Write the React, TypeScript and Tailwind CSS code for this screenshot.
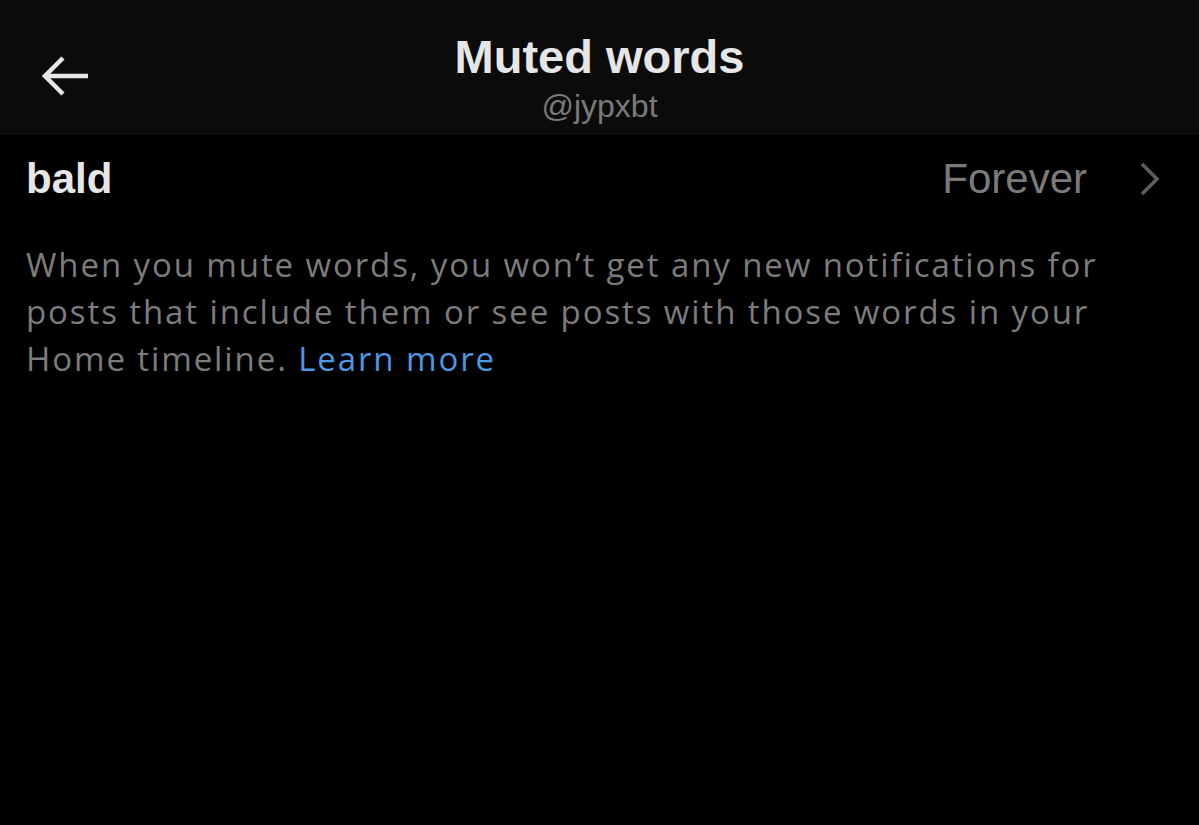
import React from 'react';

const BackArrow = () => (
  <svg width="50" height="42" viewBox="0 0 50 42" fill="none" stroke="#e6e6e6" strokeWidth="4.5" strokeLinecap="butt">
    <path d="M47 21H4" />
    <path d="M22 3L4 21l18 18" />
  </svg>
);

const Chevron = () => (
  <svg width="22" height="36" viewBox="0 0 22 36" fill="none" stroke="#5e5e5e" strokeWidth="3.5">
    <path d="M3 3l15 15L3 33" />
  </svg>
);

const App: React.FC = () => {
  return (
    <div className="min-h-[825px] w-full bg-black text-[#e6e6e6] font-['Liberation_Sans',Arial,sans-serif]">
      <header className="relative h-[135px] bg-[#0b0b0b] flex flex-col items-center pt-[29px]">
        <button className="absolute left-[41px] top-[55px]">
          <BackArrow />
        </button>
        <h1 className="text-[47px] leading-[56px] font-bold text-[#e6e6e6]">Muted words</h1>
        <span className="text-[32px] leading-[36px] text-[#7a7a7a] mt-[3px]">@jypxbt</span>
      </header>

      <div className="flex items-center justify-between pl-[26px] pr-[38px] h-[88px]">
        <span className="text-[42px] font-bold leading-none -mt-[1px]">bald</span>
        <div className="flex items-center gap-[52px]">
          <span className="text-[42px] leading-none text-[#7a7a7a]">Forever</span>
          <Chevron />
        </div>
      </div>

      <p className="px-[26px] pt-[18px] text-[33px] leading-[47px] text-[#7c7c7c] font-['Open_Sans',sans-serif] tracking-[1.9px]">
        When you mute words, you won’t get any new notifications for
        <br />
        posts that include them or see posts with those words in your
        <br />
        Home timeline. <a className="text-[#4c98e2]">Learn more</a>
      </p>
    </div>
  );
};

export default App;
